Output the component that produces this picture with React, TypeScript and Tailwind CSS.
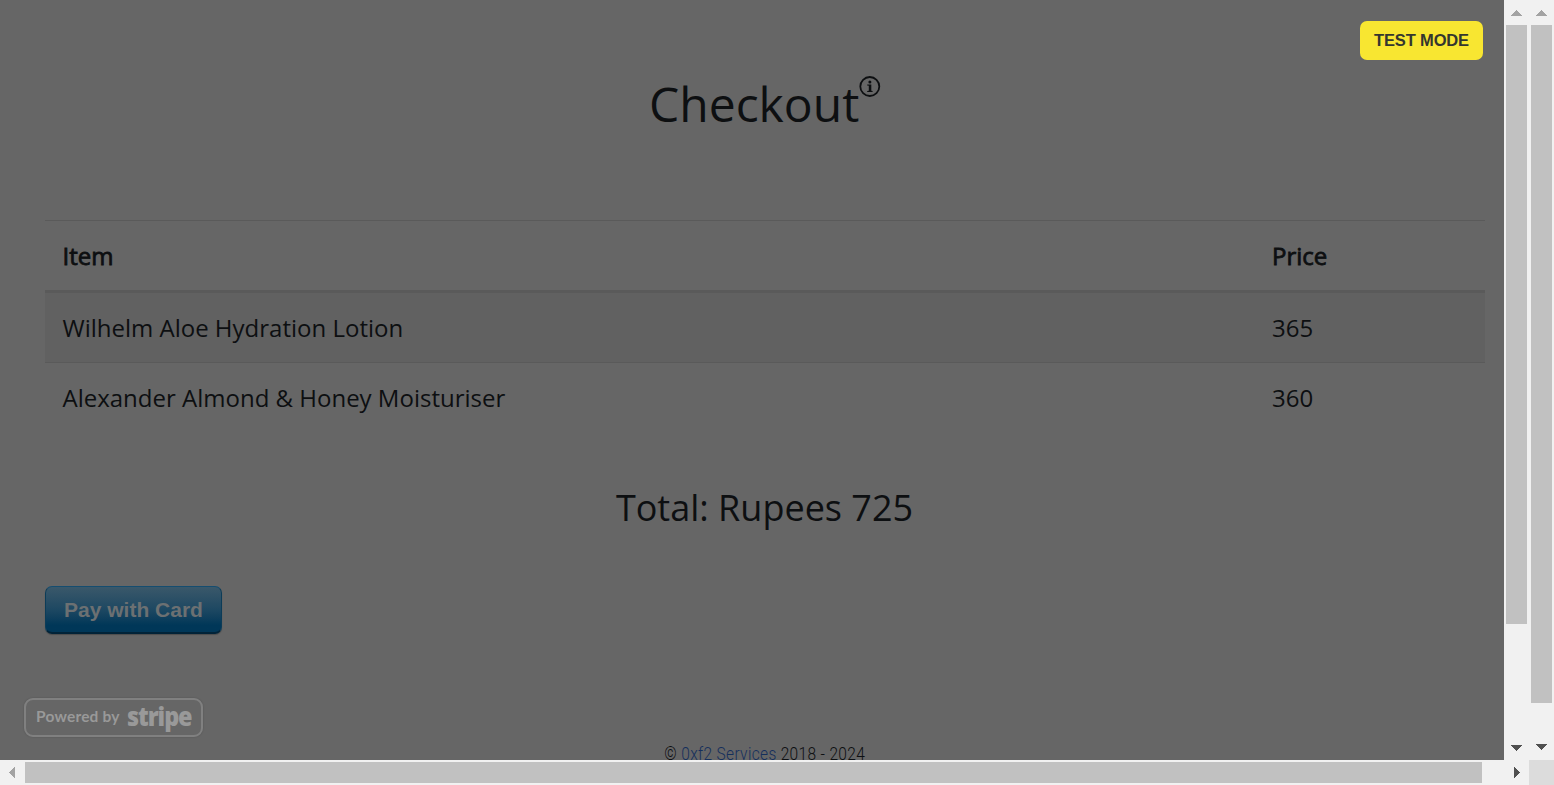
import React from "react";

const items = [
  { name: "Wilhelm Aloe Hydration Lotion", price: 365 },
  { name: "Alexander Almond & Honey Moisturiser", price: 360 },
];

type Direction = "up" | "down" | "left" | "right";

const arrowPaths: Record<Direction, string> = {
  up: "M0 6L5.5 0L11 6Z",
  down: "M0 0L11 0L5.5 6Z",
  left: "M6 0L6 11L0 5.5Z",
  right: "M0 0L6 5.5L0 11Z",
};

function Arrow({ dir, color }: { dir: Direction; color: string }) {
  const vertical = dir === "up" || dir === "down";
  return (
    <svg width={vertical ? 11 : 6} height={vertical ? 6 : 11} className="block" shapeRendering="crispEdges">
      <path d={arrowPaths[dir]} fill={color} />
    </svg>
  );
}

function InfoIcon() {
  return (
    <svg width="22" height="22" viewBox="0 0 22 22" className="mt-[15px] shrink-0">
      <circle cx="10.8" cy="11.5" r="9.5" fill="none" stroke="#0d0f11" strokeWidth="1.8" />
      <circle cx="10.9" cy="7.1" r="1.5" fill="#0d0f11" />
      <path d="M8.2 9.6H12.3V15.8L13.6 16.1V17H8.2V16.1L9.8 15.8V10.8L8.2 10.5Z" fill="#0d0f11" />
    </svg>
  );
}

export default function App() {
  return (
    <div className="grid h-[785px] w-[1554px] grid-cols-[1504px_25px_25px] grid-rows-[760px_25px] overflow-hidden bg-[#f1f1f1] font-['Open_Sans',sans-serif]">
      <main className="relative overflow-hidden bg-[#666666] text-[#0d0f11]">
        <div className="absolute right-[21px] top-[21px] flex h-[39px] w-[123px] items-center justify-center rounded-[7px] bg-[#f8e631] font-['Liberation_Sans',sans-serif] text-[16.5px] font-bold tracking-[-0.15px] text-[#34362f]">
          <span className="whitespace-nowrap">TEST MODE</span>
        </div>

        <div className="flex h-[220px] w-full items-start pl-[649px] pt-[60px]">
          <h1 className="mt-[15px] whitespace-nowrap text-[48px] leading-[58px]">Checkout</h1>
          <InfoIcon />
        </div>

        <table className="ml-[45px] w-[1440px] table-fixed border-separate border-spacing-0 text-left text-[24px] leading-[36px]">
          <colgroup>
            <col className="w-[1209px]" />
            <col className="w-[231px]" />
          </colgroup>
          <thead>
            <tr className="[&>th]:h-[73px] [&>th]:border-b-[3px] [&>th]:border-t [&>th]:border-[#5a5a5a] [&>th]:px-[18px] [&>th]:font-normal [&>th]:[-webkit-text-stroke:0.8px_#0d0f11]">
              <th>
                <span className="-ml-[0.5px]">Item</span>
              </th>
              <th>Price</th>
            </tr>
          </thead>
          <tbody>
            {items.map((item, i) => (
              <tr
                key={item.name}
                className={
                  i === 0
                    ? "bg-[#616161] [&>td]:h-[70px] [&>td]:border-b [&>td]:border-[#5a5a5a]"
                    : "[&>td]:h-[71px] [&>td]:pb-[2px]"
                }
              >
                <td className="whitespace-nowrap px-[18px]">
                  <span className="-ml-[0.5px]">{item.name}</span>
                </td>
                <td className="px-[18px]">{item.price}</td>
              </tr>
            ))}
          </tbody>
        </table>

        <h2 className="mt-[52px] w-[1529px] text-center text-[36px] leading-[43px]">Total: Rupees 725</h2>

        <button className="ml-[45px] mt-[57px] flex h-[48px] w-[177px] items-center justify-center rounded-[7px] border border-b-2 border-x-[#0c3c58] border-b-[#012338] border-t-[#154d70] bg-linear-to-b from-[#3a586a] via-[#1d4862] via-50% to-[#003758] to-85% pt-px font-['Liberation_Sans',sans-serif] text-[21px] font-bold text-[#6c7072] shadow-[0_1px_1px_rgba(0,0,0,0.25)]">
          <span className="whitespace-nowrap">Pay with Card</span>
        </button>

        <div className="ml-[24px] mt-[64px] flex h-[39px] w-[179px] items-center rounded-[9px] border-2 border-[#808080] pl-[10px] text-[#999999] shadow-[0_0_2px_rgba(0,0,0,0.2)]">
          <span className="-mt-px w-[91px] whitespace-nowrap font-['Lato',sans-serif] text-[15.5px] font-bold leading-none tracking-[0.2px]">Powered by</span>
          <span className="-mt-[3px] origin-left scale-x-90 whitespace-nowrap text-[26px] font-extrabold leading-none tracking-[-1.2px]">stripe</span>
        </div>

        <footer className="mt-[4px] w-[1529px] text-center font-['Roboto',sans-serif] text-[18px] font-light leading-[26px]">
          <span className="inline-block scale-x-[0.86] whitespace-nowrap tracking-[0.4px]">
            © <a className="text-[#152f5c]">0xf2 Services</a> 2018 - 2024
          </span>
        </footer>
      </main>

      <div className="flex flex-col items-center">
        <div className="flex h-[25px] shrink-0 items-start pt-[10px]"><Arrow dir="up" color="#a3a3a3" /></div>
        <div className="h-[599px] w-[21px] bg-[#c1c1c1]" />
        <div className="mt-[121px]"><Arrow dir="down" color="#505050" /></div>
      </div>

      <div className="flex flex-col items-center">
        <div className="flex h-[25px] shrink-0 items-start pt-[10px]"><Arrow dir="up" color="#a3a3a3" /></div>
        <div className="h-[678px] w-[21px] bg-[#c1c1c1]" />
        <div className="mt-[41px]"><Arrow dir="down" color="#505050" /></div>
      </div>

      <div className="col-span-2 flex items-center">
        <div className="flex w-[25px] shrink-0 pl-[9px]"><Arrow dir="left" color="#a3a3a3" /></div>
        <div className="h-[21px] w-[1457px] bg-[#c1c1c1]" />
        <div className="ml-[32px]"><Arrow dir="right" color="#505050" /></div>
      </div>
      <div className="bg-[#dcdcdc]" />
    </div>
  );
}
